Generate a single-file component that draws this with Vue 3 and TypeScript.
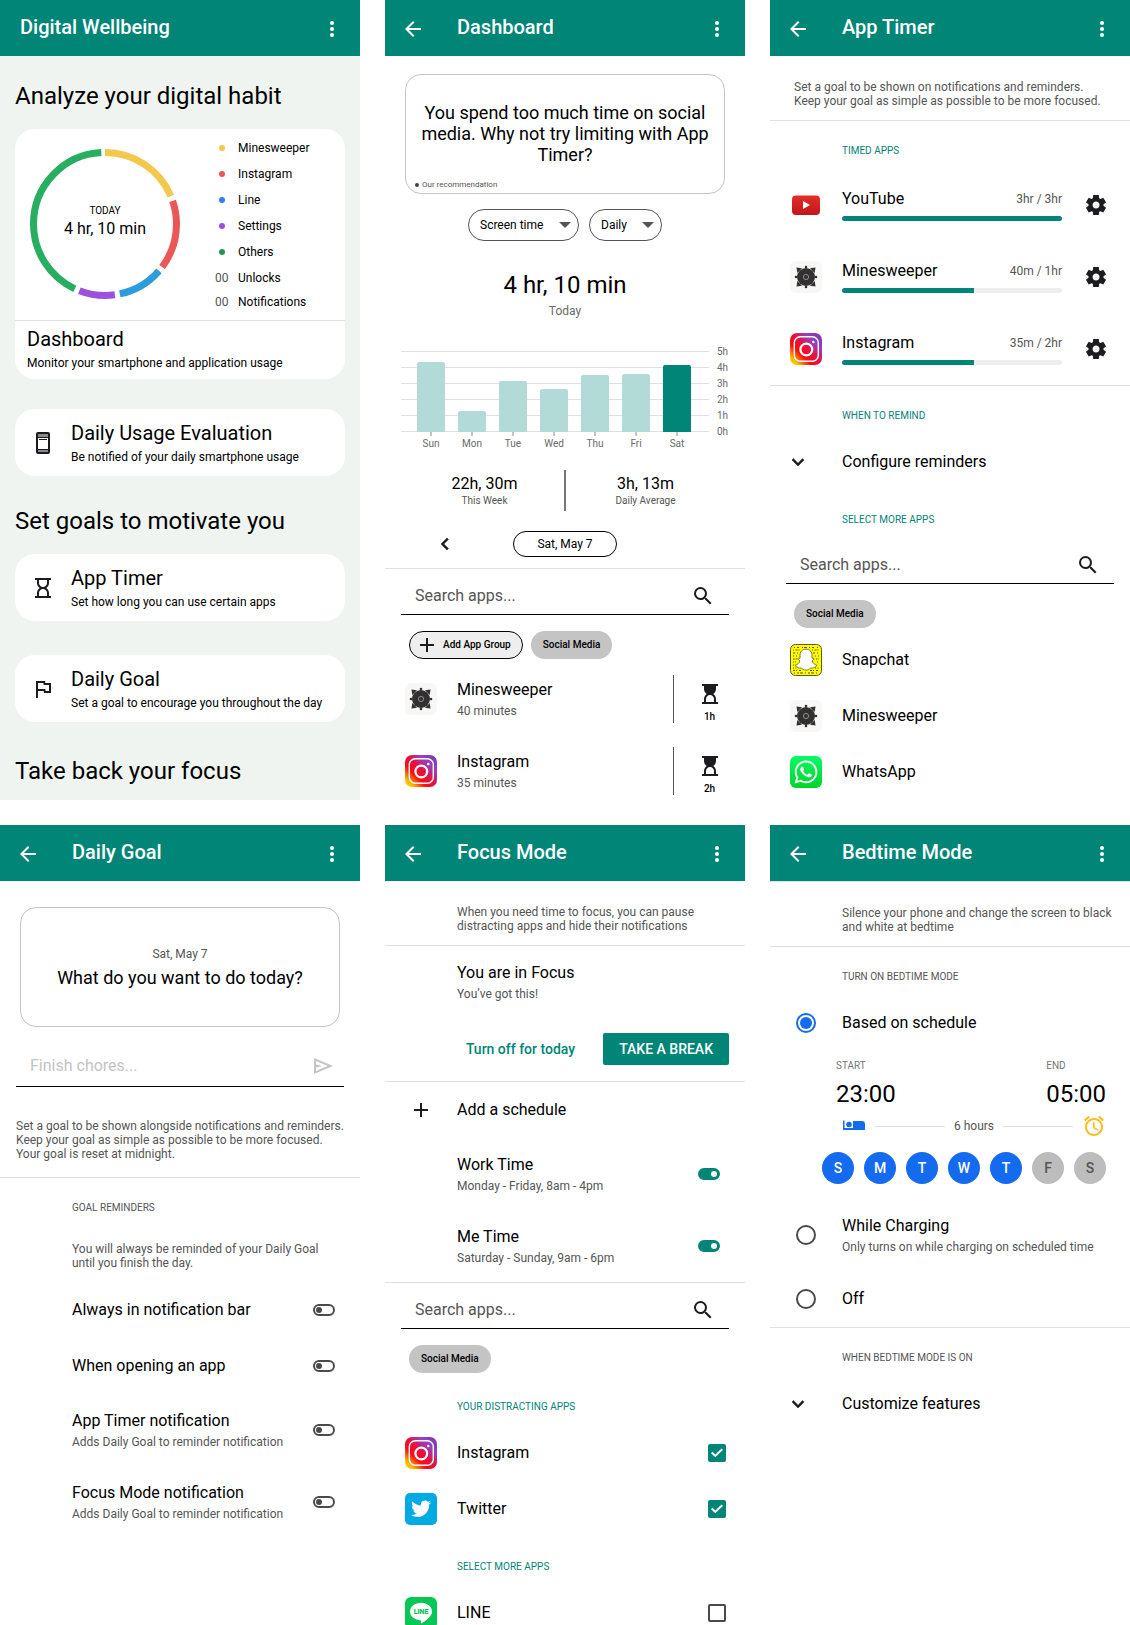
<script setup lang="ts">
import { ref } from 'vue'

interface Slice { name: string; color: string; dot: string; from: number; to: number }
interface Toggle { title: string; note?: string; on: boolean }

const slices: Slice[] = [
  { name: 'Minesweeper', color: '#f2c94c', dot: '#f2c94c', from: 0, to: 67 },
  { name: 'Instagram', color: '#eb5757', dot: '#eb5757', from: 71, to: 127 },
  { name: 'Line', color: '#2d9cdb', dot: '#2f80ed', from: 131, to: 168 },
  { name: 'Settings', color: '#9b51e0', dot: '#9b51e0', from: 172, to: 201 },
  { name: 'Others', color: '#27ae60', dot: '#219653', from: 205, to: 357 },
]
const counters = ['Unlocks', 'Notifications']

const week = [
  { day: 'Sun', height: 70 },
  { day: 'Mon', height: 21 },
  { day: 'Tue', height: 51 },
  { day: 'Wed', height: 43 },
  { day: 'Thu', height: 57 },
  { day: 'Fri', height: 58 },
  { day: 'Sat', height: 67 },
]
const hours = ['5h', '4h', '3h', '2h', '1h', '0h']

const usage = [
  { name: 'Minesweeper', icon: 'mines', time: '40 minutes', limit: '1h' },
  { name: 'Instagram', icon: 'instagram', time: '35 minutes', limit: '2h' },
]
const timed = [
  { name: 'YouTube', icon: 'youtube', time: '3hr / 3hr', percent: 100 },
  { name: 'Minesweeper', icon: 'mines', time: '40m / 1hr', percent: 60 },
  { name: 'Instagram', icon: 'instagram', time: '35m / 2hr', percent: 60 },
]
const moreApps = [
  { name: 'Snapchat', icon: 'snapchat' },
  { name: 'Minesweeper', icon: 'mines' },
  { name: 'WhatsApp', icon: 'whatsapp' },
]
const reminders = ref<Toggle[]>([
  { title: 'Always in notification bar', on: false },
  { title: 'When opening an app', on: false },
  { title: 'App Timer notification', note: 'Adds Daily Goal to reminder notification', on: false },
  { title: 'Focus Mode notification', note: 'Adds Daily Goal to reminder notification', on: false },
])
const schedules = ref<Toggle[]>([
  { title: 'Work Time', note: 'Monday - Friday, 8am - 4pm', on: true },
  { title: 'Me Time', note: 'Saturday - Sunday, 9am - 6pm', on: true },
])
const distracting = ref([
  { name: 'Instagram', icon: 'instagram', on: true },
  { name: 'Twitter', icon: 'twitter', on: true },
])
const lineSelected = ref(false)
const days = ref([
  { letter: 'S', on: true },
  { letter: 'M', on: true },
  { letter: 'T', on: true },
  { letter: 'W', on: true },
  { letter: 'T', on: true },
  { letter: 'F', on: false },
  { letter: 'S', on: false },
])
const bedtime = ref('schedule')
const goal = ref('')
</script>

<template>
  <svg class="sprite" width="0" height="0" aria-hidden="true">
    <defs>
      <linearGradient id="g-insta" x1="0" y1="1" x2="1" y2="0">
        <stop offset="0" stop-color="#ffe000" />
        <stop offset="0.14" stop-color="#ffb800" />
        <stop offset="0.34" stop-color="#fb0c14" />
        <stop offset="0.52" stop-color="#e8103c" />
        <stop offset="0.74" stop-color="#9640c8" />
        <stop offset="1" stop-color="#7038a8" />
      </linearGradient>
      <linearGradient id="g-yt" x1="0" y1="0" x2="0" y2="1">
        <stop offset="0" stop-color="#e52d27" />
        <stop offset="1" stop-color="#bf171d" />
      </linearGradient>
      <linearGradient id="g-wa" x1="0" y1="0" x2="0" y2="1">
        <stop offset="0" stop-color="#04fb66" />
        <stop offset="1" stop-color="#01d42a" />
      </linearGradient>
    </defs>
    <symbol id="i-back" viewBox="0 0 24 24"><path d="M20 11H7.83l5.59-5.59L12 4l-8 8 8 8 1.41-1.41L7.83 13H20z" /></symbol>
    <symbol id="i-more" viewBox="0 0 24 24"><circle cx="12" cy="6" r="2" /><circle cx="12" cy="12" r="2" /><circle cx="12" cy="18" r="2" /></symbol>
    <symbol id="i-phone" viewBox="0 0 24 24">
      <path fill="#8a8a8d" d="M6 2h12v5H6zM6 18h12v4H6z" />
      <path d="M8 8h8v1H8zM6 6h12v1H6zM6 18h12v1H6z" />
      <rect x="6" y="2" width="12" height="20" rx="1" fill="none" stroke="#1c1b1f" stroke-width="2" />
    </symbol>
    <symbol id="i-glass" viewBox="0 -960 960 960"><path d="M320-160h320v-120q0-66-47-113t-113-47q-66 0-113 47t-47 113v120Zm160-360q66 0 113-47t47-113v-120H320v120q0 66 47 113t113 47ZM160-80v-80h80v-120q0-61 28.500-114.500T348-480q-51-32-79.500-85.500T240-680v-120h-80v-80h640v80h-80v120q0 61-28.500 114.500T612-480q51 32 79.500 85.500T720-280v120h80v80H160Z" /></symbol>
    <symbol id="i-glass-top" viewBox="0 -960 960 960"><path d="M320-160h320v-120q0-66-47-113t-113-47q-66 0-113 47t-47 113v120ZM160-80v-80h80v-120q0-61 28.500-114.500T348-480q-51-32-79.500-85.500T240-680v-120h-80v-80h640v80h-80v120q0 61-28.500 114.500T612-480q51 32 79.500 85.500T720-280v120h80v80H160Z" /></symbol>
    <symbol id="i-flag" viewBox="0 0 24 24"><path d="M12.360 6l.4 2H18v6h-3.360l-.4-2H7V6h5.360M14 4H5v17h2v-7h5.600l.4 2h7V6h-5.600L14 4z" /></symbol>
    <symbol id="i-left" viewBox="0 0 24 24"><path d="M15.410 7.410 14 6l-6 6 6 6 1.410-1.410L10.830 12z" stroke="#1c1b1f" stroke-width=".5" /></symbol>
    <symbol id="i-down" viewBox="0 0 24 24"><path d="M7.410 8.590 12 13.170l4.590-4.580L18 10l-6 6-6-6z" stroke="#1c1b1f" stroke-width=".5" /></symbol>
    <symbol id="i-search" viewBox="0 0 24 24"><path d="M15.500 14h-.79l-.28-.27A6.471 6.471 0 0 0 16 9.500 6.500 6.500 0 1 0 9.500 16c1.610 0 3.090-.59 4.230-1.570l.27.28v.79l5 4.990L20.490 19l-4.990-5zm-6 0C7.010 14 5 11.990 5 9.500S7.010 5 9.500 5 14 7.010 14 9.500 11.990 14 9.500 14z" /></symbol>
    <symbol id="i-send" viewBox="0 -960 960 960"><path d="M120-160v-640l760 320-760 320Zm80-120 474-200-474-200v140l240 60-240 60v140Z" /></symbol>
    <symbol id="i-plus" viewBox="0 0 24 24"><path d="M19 13h-6v6h-2v-6H5v-2h6V5h2v6h6z" /></symbol>
    <symbol id="i-gear" viewBox="0 -960 960 960"><path d="m370-80-16-128q-13-5-24.500-12T307-235l-119 50L78-375l103-78q-1-7-1-13.500v-27q0-6.500 1-13.500L78-585l110-190 119 50q11-8 23-15t24-12l16-128h220l16 128q13 5 24.500 12t22.500 15l119-50 110 190-103 78q1 7 1 13.500v27q0 6.500-2 13.500l103 78-110 190-118-50q-11 8-23 15t-24 12L590-80H370Zm112-260q58 0 99-41t41-99q0-58-41-99t-99-41q-59 0-99.500 41T342-480q0 58 40.500 99t99.500 41Z" /></symbol>
    <symbol id="i-bed" viewBox="0 0 24 24"><path d="M1 6.500h1.500V14H11V7h9a3 3 0 0 1 3 3v6H1z" /><circle cx="7" cy="10.500" r="2.800" /></symbol>
    <symbol id="i-alarm" viewBox="0 0 24 24"><path d="M22 5.720l-4.600-3.860-1.290 1.530 4.600 3.860L22 5.720zM7.880 3.390L6.600 1.860 2 5.710l1.290 1.530 4.590-3.850zM12.500 8H11v6l4.750 2.850.75-1.230-4-2.370V8zM12 4c-4.970 0-9 4.030-9 9s4.020 9 9 9c4.970 0 9-4.030 9-9s-4.030-9-9-9zm0 16c-3.870 0-7-3.130-7-7s3.130-7 7-7 7 3.130 7 7-3.130 7-7 7z" /></symbol>

    <symbol id="i-mines" viewBox="0 0 32 32">
      <rect width="32" height="32" rx="6" fill="#f7f7f5" />
      <g fill="#323031">
        <circle cx="16" cy="16" r="9" />
        <circle cx="16" cy="6" r="1.300" /><circle cx="16" cy="26" r="1.300" /><circle cx="6" cy="16" r="1.300" /><circle cx="26" cy="16" r="1.300" />
        <path d="M6.500 6.500l5.500.8-4.700 4.700zM25.500 6.500l-5.500.8 4.700 4.700zM6.500 25.500l5.500-.8-4.700-4.700zM25.500 25.500l-5.500-.8 4.700-4.700z" />
      </g>
      <circle cx="16" cy="16" r="2.600" fill="none" stroke="#8e8e8e" stroke-width="1" />
    </symbol>
    <symbol id="i-instagram" viewBox="0 0 32 32">
      <rect width="32" height="32" rx="7" fill="url(#g-insta)" />
      <g fill="none" stroke="#fff">
        <rect x="4.300" y="3.800" width="24" height="24.500" rx="6" stroke-width="1.400" />
        <circle cx="16.300" cy="16.500" r="5.900" stroke-width="2.200" />
      </g>
      <circle cx="23.300" cy="9" r="1.300" fill="#fff" />
    </symbol>
    <symbol id="i-youtube" viewBox="0 0 32 32">
      <rect x="2" y="6.500" width="28" height="19.500" rx="4" fill="url(#g-yt)" />
      <path d="M13 12l7 4-7 4z" fill="#fff" />
    </symbol>
    <symbol id="i-snapchat" viewBox="0 0 32 32">
      <rect x=".5" y=".5" width="31" height="31" rx="5" fill="#fffc00" stroke="#5d5b12" />
      <g stroke="#4a4800" fill="none" stroke-width=".9">
        <path d="M4 3.500h24" stroke-dasharray="1 2 2 3 1 1 3 2" />
        <path d="M3 6h7M22 6h7" stroke-dasharray="1 1.500 2 1" />
        <path d="M3 9h6M23 9h6" stroke-dasharray="2 2 1 1" />
        <path d="M3 12h5M25 12h4" stroke-dasharray="1 2" />
        <path d="M3 15h4M26 15h3" stroke-dasharray="1.500 1" />
        <path d="M3 18h3M27 18h2M3 21h2" stroke-dasharray="1 1" />
        <path d="M3 24h4M25 24h4" stroke-dasharray="1 1.500" />
        <path d="M3 26.500h9M20 26.500h9" stroke-dasharray="2 1 1 2" />
        <path d="M4 29h24" stroke-dasharray="1 2 2 1 3 2" />
      </g>
      <path d="M16 5.200c3.800 0 6 2.600 6 6v3c.7.400 2-.4 2.200.5.100 1-2 1.200-2 2.300 0 1.700 2.400 3.700 4.600 4.200.3 1.500-2.600 1.300-3 2.700-.9.300-2.200-.1-3.200.3-1.300.8-2.600 1.900-4.600 1.900s-3.300-1.100-4.600-1.900c-1-.4-2.300 0-3.200-.3-.4-1.400-3.300-1.200-3-2.700 2.200-.5 4.600-2.500 4.600-4.200 0-1.100-2.100-1.300-2-2.300.2-.9 1.500-.1 2.200-.5v-3c0-3.400 2.200-6 6-6z" fill="#fff" stroke="#4a4800" stroke-width=".7" />
    </symbol>
    <symbol id="i-whatsapp" viewBox="0 0 32 32">
      <rect width="32" height="32" rx="6" fill="url(#g-wa)" />
      <path transform="translate(4.600 4.600) scale(.95)" fill="#fff" d="M17.472 14.382c-.297-.149-1.758-.867-2.030-.967-.273-.099-.471-.148-.67.15-.197.297-.767.966-.94 1.164-.173.199-.347.223-.644.075-.297-.15-1.255-.463-2.390-1.475-.883-.788-1.480-1.761-1.653-2.059-.173-.297-.018-.458.13-.606.134-.133.298-.347.446-.52.149-.174.198-.298.298-.497.099-.198.05-.371-.025-.52-.075-.149-.669-1.612-.916-2.207-.242-.579-.487-.5-.669-.51-.173-.008-.371-.01-.57-.01-.198 0-.52.074-.792.372-.272.297-1.040 1.016-1.040 2.479 0 1.462 1.065 2.875 1.213 3.074.149.198 2.096 3.200 5.077 4.487.709.306 1.262.489 1.694.625.712.227 1.360.195 1.871.118.571-.085 1.758-.719 2.006-1.413.248-.694.248-1.289.173-1.413-.074-.124-.272-.198-.57-.347m-5.421 7.403h-.004a9.870 9.870 0 0 1-5.031-1.378l-.361-.214-3.741.982.998-3.648-.235-.374a9.860 9.860 0 0 1-1.510-5.260c.001-5.450 4.436-9.884 9.888-9.884 2.640 0 5.122 1.030 6.988 2.898a9.825 9.825 0 0 1 2.893 6.994c-.003 5.450-4.437 9.884-9.885 9.884m8.413-18.297A11.815 11.815 0 0 0 12.050 0C5.495 0 .16 5.335.157 11.892c0 2.096.547 4.142 1.588 5.945L.057 24l6.305-1.654a11.882 11.882 0 0 0 5.683 1.448h.005c6.554 0 11.890-5.335 11.893-11.893a11.821 11.821 0 0 0-3.480-8.413z" />
    </symbol>
    <symbol id="i-twitter" viewBox="0 0 32 32">
      <rect width="32" height="32" rx="5" fill="#00aae4" />
      <path transform="translate(6 5.600) scale(.84)" fill="#fff" d="M23.953 4.570a10 10 0 0 1-2.825.775 4.958 4.958 0 0 0 2.163-2.723c-.951.555-2.005.959-3.127 1.184a4.920 4.920 0 0 0-8.384 4.482C7.690 8.095 4.067 6.130 1.640 3.162a4.822 4.822 0 0 0-.666 2.475c0 1.710.87 3.213 2.188 4.096a4.904 4.904 0 0 1-2.228-.616v.06a4.923 4.923 0 0 0 3.946 4.827 4.996 4.996 0 0 1-2.212.085 4.936 4.936 0 0 0 4.604 3.417 9.867 9.867 0 0 1-6.102 2.105c-.39 0-.779-.023-1.170-.067a13.995 13.995 0 0 0 7.557 2.209c9.053 0 13.998-7.496 13.998-13.985 0-.21 0-.42-.015-.63A9.935 9.935 0 0 0 24 4.590z" />
    </symbol>
  </svg>

  <main class="board">
    <section class="screen tinted">
      <header class="bar home">
        <h1>Digital Wellbeing</h1>
        <button type="button" aria-label="Menu"><svg class="icon"><use href="#i-more" /></svg></button>
      </header>
      <h2 class="group">Analyze your digital habit</h2>
      <a href="#dashboard" class="card overview">
        <div class="chart">
          <div class="donut">
            <svg viewBox="0 0 150 150" aria-hidden="true">
              <circle
                v-for="s in slices" :key="s.name" cx="75" cy="75" r="71.500" fill="none" stroke-width="7"
                :stroke="s.color" pathLength="360" :stroke-dasharray="`${s.to - s.from} 360`"
                :stroke-dashoffset="-s.from" transform="rotate(-90 75 75)"
              />
            </svg>
            <p><small>TODAY</small>4 hr, 10 min</p>
          </div>
          <ul class="legend">
            <li v-for="s in slices" :key="s.name">
              <svg viewBox="0 0 12 12" width="12" height="12"><circle cx="7" cy="6" r="3" :fill="s.dot" /></svg>{{ s.name }}
            </li>
            <li v-for="c in counters" :key="c"><span class="count">00</span>{{ c }}</li>
          </ul>
        </div>
        <div class="caption">
          <strong>Dashboard</strong>
          <span>Monitor your smartphone and application usage</span>
        </div>
      </a>
      <a href="#evaluation" class="card tile first">
        <svg class="icon"><use href="#i-phone" /></svg>
        <div><strong>Daily Usage Evaluation</strong><span>Be notified of your daily smartphone usage</span></div>
      </a>
      <h2 class="group second">Set goals to motivate you</h2>
      <a href="#timer" class="card tile">
        <svg class="icon"><use href="#i-glass" /></svg>
        <div><strong>App Timer</strong><span>Set how long you can use certain apps</span></div>
      </a>
      <a href="#goal" class="card tile next">
        <svg class="icon"><use href="#i-flag" /></svg>
        <div><strong>Daily Goal</strong><span>Set a goal to encourage you throughout the day</span></div>
      </a>
      <h2 class="group third">Take back your focus</h2>
    </section>

    <section class="screen">
      <header class="bar">
        <button type="button" aria-label="Back"><svg class="icon"><use href="#i-back" /></svg></button>
        <h1>Dashboard</h1>
        <button type="button" aria-label="Menu"><svg class="icon"><use href="#i-more" /></svg></button>
      </header>
      <div class="notice tip">
        <p class="lead">You spend too much time on social media. Why not try limiting with App Timer?</p>
        <p class="foot"><i></i>Our recommendation</p>
      </div>
      <div class="filters">
        <span class="pick"><select aria-label="Metric"><option>Screen time</option></select></span>
        <span class="pick"><select aria-label="Period"><option>Daily</option></select></span>
      </div>
      <div class="total"><strong>4 hr, 10 min</strong><span>Today</span></div>
      <div class="graph">
        <div class="plotarea">
          <div class="plot">
            <div v-for="w in week" :key="w.day" class="column" :class="{ today: w.day === 'Sat' }" :style="{ height: w.height + 'px' }"></div>
          </div>
          <div class="names"><span v-for="w in week" :key="w.day">{{ w.day }}</span></div>
        </div>
        <div class="scale"><span v-for="h in hours" :key="h">{{ h }}</span></div>
      </div>
      <div class="stats">
        <div><strong>22h, 30m</strong><span>This Week</span></div>
        <div><strong>3h, 13m</strong><span>Daily Average</span></div>
      </div>
      <div class="dates">
        <button type="button" aria-label="Previous day" class="prev"><svg class="icon"><use href="#i-left" /></svg></button>
        <button type="button" class="date">Sat, May 7</button>
      </div>
      <hr>
      <div class="field">
        <input type="search" aria-label="Search apps" placeholder="Search apps...">
        <svg class="icon"><use href="#i-search" /></svg>
      </div>
      <div class="chips">
        <button type="button" class="chip add"><svg class="icon"><use href="#i-plus" /></svg>Add App Group</button>
        <button type="button" class="chip">Social Media</button>
      </div>
      <div v-for="u in usage" :key="u.name" class="row tall">
        <svg class="app"><use :href="'#i-' + u.icon" /></svg>
        <div class="text"><strong>{{ u.name }}</strong><span>{{ u.time }}</span></div>
        <div class="limit"><svg class="icon"><use href="#i-glass-top" /></svg>{{ u.limit }}</div>
      </div>
    </section>

    <section class="screen">
      <header class="bar">
        <button type="button" aria-label="Back"><svg class="icon"><use href="#i-back" /></svg></button>
        <h1>App Timer</h1>
        <button type="button" aria-label="Menu"><svg class="icon"><use href="#i-more" /></svg></button>
      </header>
      <p class="about wide">Set a goal to be shown on notifications and reminders. Keep your goal as simple as possible to be more focused.</p>
      <hr>
      <h2 class="label">TIMED APPS</h2>
      <div v-for="t in timed" :key="t.name" class="row tall">
        <svg class="app"><use :href="'#i-' + t.icon" /></svg>
        <div class="meter">
          <div><strong>{{ t.name }}</strong><span>{{ t.time }}</span></div>
          <div class="track"><div :style="{ width: t.percent + '%' }"></div></div>
        </div>
        <button type="button" class="gear" :aria-label="t.name + ' settings'"><svg class="icon"><use href="#i-gear" /></svg></button>
      </div>
      <hr>
      <h2 class="label">WHEN TO REMIND</h2>
      <button type="button" class="row expand"><svg class="icon"><use href="#i-down" /></svg>Configure reminders</button>
      <h2 class="label">SELECT MORE APPS</h2>
      <div class="field">
        <input type="search" aria-label="Search apps" placeholder="Search apps...">
        <svg class="icon"><use href="#i-search" /></svg>
      </div>
      <div class="chips"><button type="button" class="chip">Social Media</button></div>
      <div v-for="m in moreApps" :key="m.name" class="row">
        <svg class="app"><use :href="'#i-' + m.icon" /></svg>
        <div class="text"><strong>{{ m.name }}</strong></div>
      </div>
    </section>

    <section class="screen">
      <header class="bar">
        <button type="button" aria-label="Back"><svg class="icon"><use href="#i-back" /></svg></button>
        <h1>Daily Goal</h1>
        <button type="button" aria-label="Menu"><svg class="icon"><use href="#i-more" /></svg></button>
      </header>
      <div class="notice ask">
        <p class="when">Sat, May 7</p>
        <p class="lead">What do you want to do today?</p>
      </div>
      <div class="field goal">
        <input v-model="goal" type="text" aria-label="Daily goal" placeholder="Finish chores...">
        <svg class="icon"><use href="#i-send" /></svg>
      </div>
      <p class="about goalinfo">Set a goal to be shown alongside notifications and reminders. Keep your goal as simple as possible to be more focused.<br>Your goal is reset at midnight.</p>
      <hr>
      <h2 class="label muted">GOAL REMINDERS</h2>
      <p class="about short">You will always be reminded of your Daily Goal until you finish the day.</p>
      <label v-for="r in reminders" :key="r.title" class="row bare" :class="{ tall: r.note }">
        <span class="text"><strong>{{ r.title }}</strong><span v-if="r.note">{{ r.note }}</span></span>
        <input v-model="r.on" type="checkbox" role="switch" class="switch">
      </label>
    </section>

    <section class="screen">
      <header class="bar">
        <button type="button" aria-label="Back"><svg class="icon"><use href="#i-back" /></svg></button>
        <h1>Focus Mode</h1>
        <button type="button" aria-label="Menu"><svg class="icon"><use href="#i-more" /></svg></button>
      </header>
      <p class="about">When you need time to focus, you can pause distracting apps and hide their notifications</p>
      <hr>
      <div class="row bare tall"><div class="text"><strong>You are in Focus</strong><span>You’ve got this!</span></div></div>
      <div class="actions">
        <button type="button" class="quiet">Turn off for today</button>
        <button type="button" class="solid">TAKE A BREAK</button>
      </div>
      <hr>
      <button type="button" class="row"><span class="app"><svg class="icon"><use href="#i-plus" /></svg></span>Add a schedule</button>
      <label v-for="s in schedules" :key="s.title" class="row bare tall">
        <span class="text"><strong>{{ s.title }}</strong><span>{{ s.note }}</span></span>
        <input v-model="s.on" type="checkbox" role="switch" class="switch">
      </label>
      <hr>
      <div class="field">
        <input type="search" aria-label="Search apps" placeholder="Search apps...">
        <svg class="icon"><use href="#i-search" /></svg>
      </div>
      <div class="chips"><button type="button" class="chip">Social Media</button></div>
      <h2 class="label">YOUR DISTRACTING APPS</h2>
      <label v-for="d in distracting" :key="d.name" class="row">
        <svg class="app"><use :href="'#i-' + d.icon" /></svg>
        <span class="text"><strong>{{ d.name }}</strong></span>
        <input v-model="d.on" type="checkbox" class="tick">
      </label>
      <h2 class="label">SELECT MORE APPS</h2>
      <label class="row">
        <svg class="app" viewBox="0 0 32 32">
          <rect width="32" height="32" rx="6" fill="#06c755" />
          <path d="M16 5.800c6 0 11 3.900 11 8.800 0 4.500-5.500 8.900-10.200 11.600-.8.300-1-.2-.9-.8l.2-2c-6.100 0-11.100-3.900-11.100-8.800s5-8.800 11-8.800z" fill="#fff" />
          <text x="16" y="17" text-anchor="middle" font-size="7" font-weight="900" fill="#06c755">LINE</text>
        </svg>
        <span class="text"><strong>LINE</strong></span>
        <input v-model="lineSelected" type="checkbox" class="tick">
      </label>
    </section>

    <section class="screen">
      <header class="bar">
        <button type="button" aria-label="Back"><svg class="icon"><use href="#i-back" /></svg></button>
        <h1>Bedtime Mode</h1>
        <button type="button" aria-label="Menu"><svg class="icon"><use href="#i-more" /></svg></button>
      </header>
      <hr>
      <p class="about">Silence your phone and change the screen to black and white at bedtime</p>
      <hr>
      <h2 class="label muted">TURN ON BEDTIME MODE</h2>
      <label class="row">
        <span class="app"><input v-model="bedtime" type="radio" name="bedtime" value="schedule"></span>
        <span class="text"><strong>Based on schedule</strong></span>
      </label>
      <div class="plan">
        <div class="times">
          <div><span>START</span><strong>23:00</strong></div>
          <div><span>END</span><strong>05:00</strong></div>
        </div>
        <div class="span">
          <svg class="icon bed"><use href="#i-bed" /></svg><i></i>6 hours<i></i><svg class="icon alarm"><use href="#i-alarm" /></svg>
        </div>
        <div class="days">
          <button v-for="(d, n) in days" :key="n" type="button" :class="{ on: d.on }" :aria-pressed="d.on" @click="d.on = !d.on">{{ d.letter }}</button>
        </div>
      </div>
      <label class="row tall">
        <span class="app"><input v-model="bedtime" type="radio" name="bedtime" value="charging"></span>
        <span class="text"><strong>While Charging</strong><span>Only turns on while charging on scheduled time</span></span>
      </label>
      <label class="row">
        <span class="app"><input v-model="bedtime" type="radio" name="bedtime" value="off"></span>
        <span class="text"><strong>Off</strong></span>
      </label>
      <hr>
      <h2 class="label muted">WHEN BEDTIME MODE IS ON</h2>
      <button type="button" class="row expand"><svg class="icon"><use href="#i-down" /></svg>Customize features</button>
    </section>
  </main>
</template>

<style>
body { margin: 0; background: #fff; }
</style>

<style scoped>
* { box-sizing: border-box; }
.sprite { display: block; }
.board {
  display: grid;
  grid-template-columns: repeat(3, minmax(0, 1fr));
  gap: 25px;
  font-family: Roboto, "Liberation Sans", sans-serif;
  font-size: 12px;
  line-height: 14px;
  color: #000;
}
.screen { aspect-ratio: 9 / 20; min-height: 0; overflow: hidden; background: #fff; }
.tinted { background: #eff4f1; }
h1, h2, p, ul { margin: 0; padding: 0; font-weight: 400; }
strong { font-weight: 400; }
button, input, select { font: inherit; color: inherit; margin: 0; padding: 0; border: 0; background: none; }
hr { margin: 0; border: 0; height: 1px; background: #e0e0e0; }
.icon { display: block; flex: none; width: 24px; height: 24px; fill: #1c1b1f; }

.bar {
  display: flex;
  align-items: flex-start;
  gap: 32px;
  height: 56px;
  padding: 17px 16px 0;
  background: #018577;
  color: #fff;
}
.bar.home { padding-left: 20px; }
.bar h1 { flex: 1; font-size: 20px; line-height: 20px; font-weight: 500; }
.bar .icon { fill: #fff; }

.group { margin: 26px 15px 19px; font-size: 24px; line-height: 28px; }
.group.second { margin-top: 31px; }
.group.third { margin-top: 35px; }
.card { display: block; margin: 0 15px; border-radius: 20px; background: #fff; color: #000; text-decoration: none; overflow: hidden; }
.card strong { display: block; font-size: 20px; line-height: 24px; }
.card span { display: block; }
.chart { display: flex; justify-content: space-between; height: 191px; padding: 12px 20px 0 15px; }
.donut { display: grid; place-items: center; width: 150px; height: 150px; margin-top: 8px; }
.donut > * { grid-area: 1 / 1; }
.donut svg { width: 150px; height: 150px; }
.donut p { padding-bottom: 6px; font-size: 16px; line-height: 20px; text-align: center; }
.donut small { display: block; font-size: 10px; line-height: 16px; }
.legend { flex: none; width: 110px; list-style: none; }
.legend li { display: flex; align-items: center; gap: 11px; height: 14px; margin-bottom: 12px; }
.legend li:nth-child(6) { margin-bottom: 10px; }
.legend svg, .legend .count { flex: none; width: 12px; color: #555; }
.caption { padding: 6px 12px 9px; border-top: 1px solid #e0e0e0; }
.caption span, .tile span { margin-top: 5px; }
.tile { display: flex; align-items: center; gap: 16px; padding: 12px 16px; }
.tile.first { margin-top: 30px; }
.tile.next { margin-top: 34px; }

.notice { margin: 0 20px; height: 120px; border: 1px solid #c4c4c4; border-radius: 16px; text-align: center; }
.lead { font-size: 18px; line-height: 21px; }
.tip { margin-top: 18px; padding: 27px 8px 0; }
.foot { display: flex; align-items: center; gap: 3px; margin-top: 15px; padding-left: 1px; font-size: 8px; line-height: 10px; color: #555; }
.foot i { width: 4px; height: 4px; border-radius: 50%; background: #444; }
.ask { margin-top: 26px; padding-top: 39px; }
.when { color: #555; margin-bottom: 6px; }

.filters { display: flex; justify-content: center; gap: 10px; margin-top: 15px; }
.pick { display: grid; align-items: center; }
.pick > *, .pick::after { grid-area: 1 / 1; }
.pick select { height: 32px; padding: 0 34px 0 11px; border: 1px solid #555; border-radius: 16px; appearance: none; }
.pick::after { content: ""; justify-self: end; margin-right: 8px; border: 6px solid transparent; border-top-color: #555; border-bottom: 0; pointer-events: none; }

.total { display: flex; flex-direction: column; align-items: center; gap: 5px; margin-top: 30px; color: #6a6a6a; }
.total strong { font-size: 24px; line-height: 28px; color: #000; }
.graph { display: flex; gap: 8px; margin: 26px 16px 0; font-size: 10px; line-height: 12px; color: #6a6a6a; }
.plotarea { flex: 1; padding-top: 7px; }
.plot { display: flex; align-items: flex-end; justify-content: space-between; height: 81px; padding: 0 18px 0 16px; background: repeating-linear-gradient(#e0e0e0 0 1px, transparent 1px 16px); }
.column { width: 28px; border-radius: 2px 2px 0 0; background: #b2dad6; }
.column.today { background: #018577; }
.names { display: flex; justify-content: space-between; padding: 0 18px 0 16px; }
.names span { display: flex; flex-direction: column; align-items: center; width: 28px; }
.names span::before { content: ""; width: 2px; height: 4px; margin-bottom: 2px; background: #c4c4c4; }
.scale { width: 12px; line-height: 16px; }
.scale span { display: block; }
.stats { display: flex; margin: 20px 20px; text-align: center; font-size: 10px; line-height: 12px; color: #555; }
.stats div { flex: 1; padding: 4px 0; }
.stats div + div { border-left: 2px solid #777; }
.stats strong { display: block; font-size: 16px; line-height: 20px; color: #000; margin-bottom: 1px; }
.stats span { display: block; }
.dates { display: grid; grid-template-columns: 1fr auto 1fr; align-items: center; margin-bottom: 11px; }
.prev { justify-self: start; margin-left: 48px; }
.date { height: 26px; padding: 0 23px; border: 1px solid #000; border-radius: 13px; }

.field { display: flex; align-items: center; height: 46px; margin: 0 16px; padding: 9px 14px 0; border-bottom: 1px solid #000; }
.field input { flex: 1; min-width: 0; font-size: 16px; line-height: 20px; outline: 0; appearance: none; }
.field input::placeholder { color: #555; opacity: 1; }
.field.goal { height: 42px; margin-top: 18px; padding: 0 9px 0 14px; }
.field.goal input::placeholder { color: #c4c4c4; }
.goal .icon { fill: #c4c4c4; }
.chips { display: flex; gap: 8px; margin: 16px 24px 4px; }
.chip { display: flex; align-items: center; gap: 4px; height: 28px; padding: 0 12px; border-radius: 14px; background: #c4c4c4; font-size: 10px; line-height: 12px; font-weight: 500; }
.chip.add { padding: 0 11px 0 5px; border: 1px solid #000; background: #eee; }

.row { display: flex; align-items: center; gap: 20px; width: 100%; height: 56px; padding-left: 20px; font-size: 16px; line-height: 20px; text-align: left; }
.row.tall { height: 72px; }
.row.bare { padding-left: 72px; }
.row.expand { padding-left: 16px; gap: 32px; }
.app { display: grid; place-items: center; flex: none; width: 32px; height: 32px; }
.text { flex: 1; min-width: 0; }
.text strong { display: block; }
.text > span { display: block; margin-top: 4px; font-size: 12px; line-height: 14px; color: #555; }
.limit { display: flex; flex-direction: column; align-items: center; gap: 5px; width: 72px; height: 48px; padding-top: 7px; border-left: 1px solid #555; font-size: 10px; line-height: 12px; font-weight: 500; }
.meter { flex: 1; min-width: 0; }
.meter > div:first-child { display: flex; justify-content: space-between; }
.meter span { font-size: 12px; color: #555; }
.track { height: 5px; margin-top: 7px; border-radius: 3px; background: #eee; overflow: hidden; }
.track div { height: 100%; background: #018577; }
.gear { margin-right: 22px; margin-left: 2px; }

.label { height: 48px; padding: 24px 0 0 72px; font-size: 10px; line-height: 12px; color: #018577; }
.label.muted { color: #555; }
.about { padding: 24px 16px 12px 72px; color: #555; }
.about.wide { padding: 24px 24px 12px; }
.about.goalinfo { padding: 32px 8px 16px 16px; }
.about.short { padding: 16px 24px 12px 72px; }

.switch { flex: none; display: flex; align-items: center; width: 22px; height: 12px; margin-right: 25px; padding: 0 1px; border: 2px solid #4a4a4a; border-radius: 6px; appearance: none; }
.switch::after { content: ""; width: 6px; height: 6px; border-radius: 50%; background: #4a4a4a; }
.switch:checked { justify-content: flex-end; border-color: #018577; background: #018577; }
.switch:checked::after { background: #fff; }
.tick { flex: none; display: grid; place-items: center; width: 18px; height: 18px; margin-right: 19px; border: 2px solid #4a4a4a; border-radius: 2px; appearance: none; }
.tick:checked { border-color: #018577; background: #018577; }
.tick:checked::after { content: ""; width: 12px; height: 10px; background: #fff; clip-path: polygon(0 52%, 12% 38%, 36% 64%, 88% 4%, 100% 18%, 36% 92%); }
input[type="radio"] { display: grid; place-items: center; width: 20px; height: 20px; border: 2px solid #4a4a4a; border-radius: 50%; appearance: none; }
input[type="radio"]:checked { border-color: #146bf0; }
input[type="radio"]:checked::after { content: ""; width: 12px; height: 12px; border-radius: 50%; background: #146bf0; }

.actions { display: flex; justify-content: flex-end; align-items: center; gap: 28px; padding: 15px 16px 16px; font-size: 14px; line-height: 16px; font-weight: 500; }
.quiet { color: #018577; }
.solid { height: 32px; padding: 0 16px; border-radius: 2px; background: #018577; color: #fff; }

.plan { padding: 9px 24px 15px 52px; }
.times { display: flex; justify-content: space-between; padding-left: 14px; font-size: 10px; line-height: 12px; color: #777; }
.times span { display: block; }
.times strong { display: block; margin-top: 8px; font-size: 24px; line-height: 28px; color: #000; }
.span { display: flex; align-items: center; gap: 9px; height: 24px; margin: 6px 0 14px; padding-left: 20px; color: #555; }
.span i { flex: 1; height: 1px; background: #e0e0e0; }
.bed { fill: #146bf0; }
.alarm { fill: #fbbc1c; }
.days { display: flex; justify-content: space-between; }
.days button { width: 32px; height: 32px; border-radius: 50%; background: #bdbdbd; color: #555; font-size: 14px; font-weight: 500; }
.days .on { background: #146bf0; color: #fff; }
</style>
